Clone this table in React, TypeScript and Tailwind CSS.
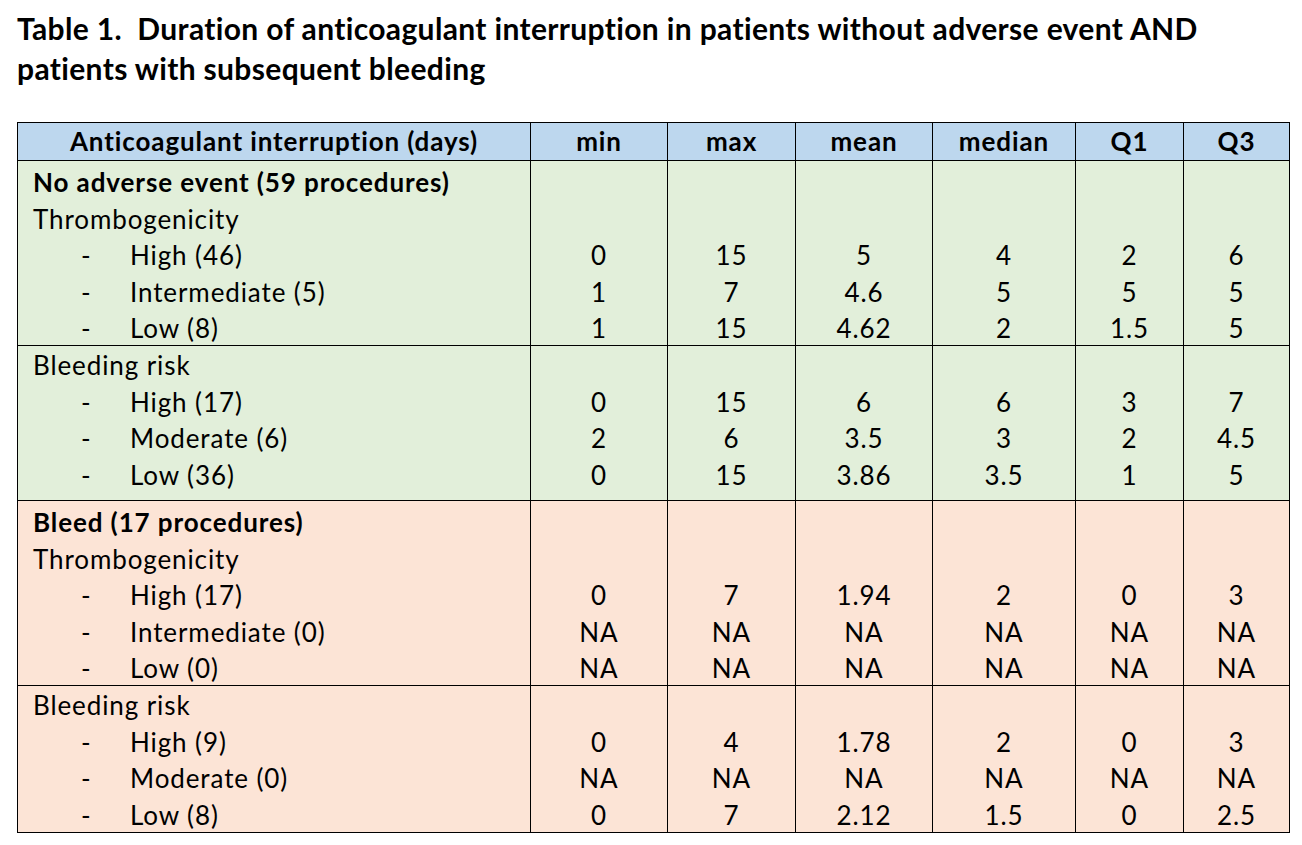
import React from "react";

type Line = { label: string; kind: "group" | "cat" | "item"; vals?: string[] };

const groups: { bg: string; h: string; pt: string; lines: Line[] }[] = [
  {
    bg: "bg-[#e2efda]",
    h: "h-[185px]",
    pt: "pt-[3px]",
    lines: [
      { label: "No adverse event (59 procedures)", kind: "group" },
      { label: "Thrombogenicity", kind: "cat" },
      { label: "High (46)", kind: "item", vals: ["0", "15", "5", "4", "2", "6"] },
      { label: "Intermediate (5)", kind: "item", vals: ["1", "7", "4.6", "5", "5", "5"] },
      { label: "Low (8)", kind: "item", vals: ["1", "15", "4.62", "2", "1.5", "5"] },
    ],
  },
  {
    bg: "bg-[#e2efda]",
    h: "h-[155px]",
    pt: "pt-[1px]",
    lines: [
      { label: "Bleeding risk", kind: "cat" },
      { label: "High (17)", kind: "item", vals: ["0", "15", "6", "6", "3", "7"] },
      { label: "Moderate (6)", kind: "item", vals: ["2", "6", "3.5", "3", "2", "4.5"] },
      { label: "Low (36)", kind: "item", vals: ["0", "15", "3.86", "3.5", "1", "5"] },
    ],
  },
  {
    bg: "bg-[#fce4d6]",
    h: "h-[185px]",
    pt: "pt-[3px]",
    lines: [
      { label: "Bleed (17 procedures)", kind: "group" },
      { label: "Thrombogenicity", kind: "cat" },
      { label: "High (17)", kind: "item", vals: ["0", "7", "1.94", "2", "0", "3"] },
      { label: "Intermediate (0)", kind: "item", vals: ["NA", "NA", "NA", "NA", "NA", "NA"] },
      { label: "Low (0)", kind: "item", vals: ["NA", "NA", "NA", "NA", "NA", "NA"] },
    ],
  },
  {
    bg: "bg-[#fce4d6]",
    h: "h-[147px]",
    pt: "pt-[1px]",
    lines: [
      { label: "Bleeding risk", kind: "cat" },
      { label: "High (9)", kind: "item", vals: ["0", "4", "1.78", "2", "0", "3"] },
      { label: "Moderate (0)", kind: "item", vals: ["NA", "NA", "NA", "NA", "NA", "NA"] },
      { label: "Low (8)", kind: "item", vals: ["0", "7", "2.12", "1.5", "0", "2.5"] },
    ],
  },
];

const headers = ["min", "max", "mean", "median", "Q1", "Q3"];

export default function App() {
  return (
    <div
      className="w-[1302px] h-[845px] bg-white text-black overflow-hidden"
      style={{ fontFamily: "Lato, 'Open Sans', sans-serif" }}
    >
      <div className="pl-[17px] pt-[8px] text-[30px] leading-[40px] font-bold tracking-[0.35px]">
        <div>Table 1.&nbsp; Duration of anticoagulant interruption in patients without adverse event AND</div>
        <div>patients with subsequent bleeding</div>
      </div>
      <div className="ml-[17px] mt-[34px] w-[1273px] border-l border-t border-black grid grid-cols-[513px_137px_128px_137px_143px_108px_106px] text-[26px] tracking-[0.9px]">
        <div className="h-[38px] bg-[#bdd7ee] border-r border-b border-black flex items-center justify-center font-bold">
          Anticoagulant interruption (days)
        </div>
        {headers.map((h) => (
          <div
            key={h}
            className="h-[38px] bg-[#bdd7ee] border-r border-b border-black flex items-center justify-center font-bold"
          >
            {h}
          </div>
        ))}
        {groups.map((g, gi) => (
          <React.Fragment key={gi}>
            <div className={`${g.bg} ${g.h} ${g.pt} border-r border-b border-black leading-[36.6px]`}>
              {g.lines.map((l, li) =>
                l.kind === "item" ? (
                  <div key={li} className="flex">
                    <span className="w-[112px] pl-[63px]">-</span>
                    <span>{l.label}</span>
                  </div>
                ) : (
                  <div key={li} className={`pl-[15px] ${l.kind === "group" ? "font-bold" : ""}`}>
                    {l.label}
                  </div>
                )
              )}
            </div>
            {headers.map((_, ci) => (
              <div
                key={ci}
                className={`${g.bg} ${g.h} ${g.pt} border-r border-b border-black leading-[36.6px] text-center`}
              >
                {g.lines.map((l, li) => (
                  <div key={li}>{l.vals ? l.vals[ci] : "\u00a0"}</div>
                ))}
              </div>
            ))}
          </React.Fragment>
        ))}
      </div>
    </div>
  );
}
